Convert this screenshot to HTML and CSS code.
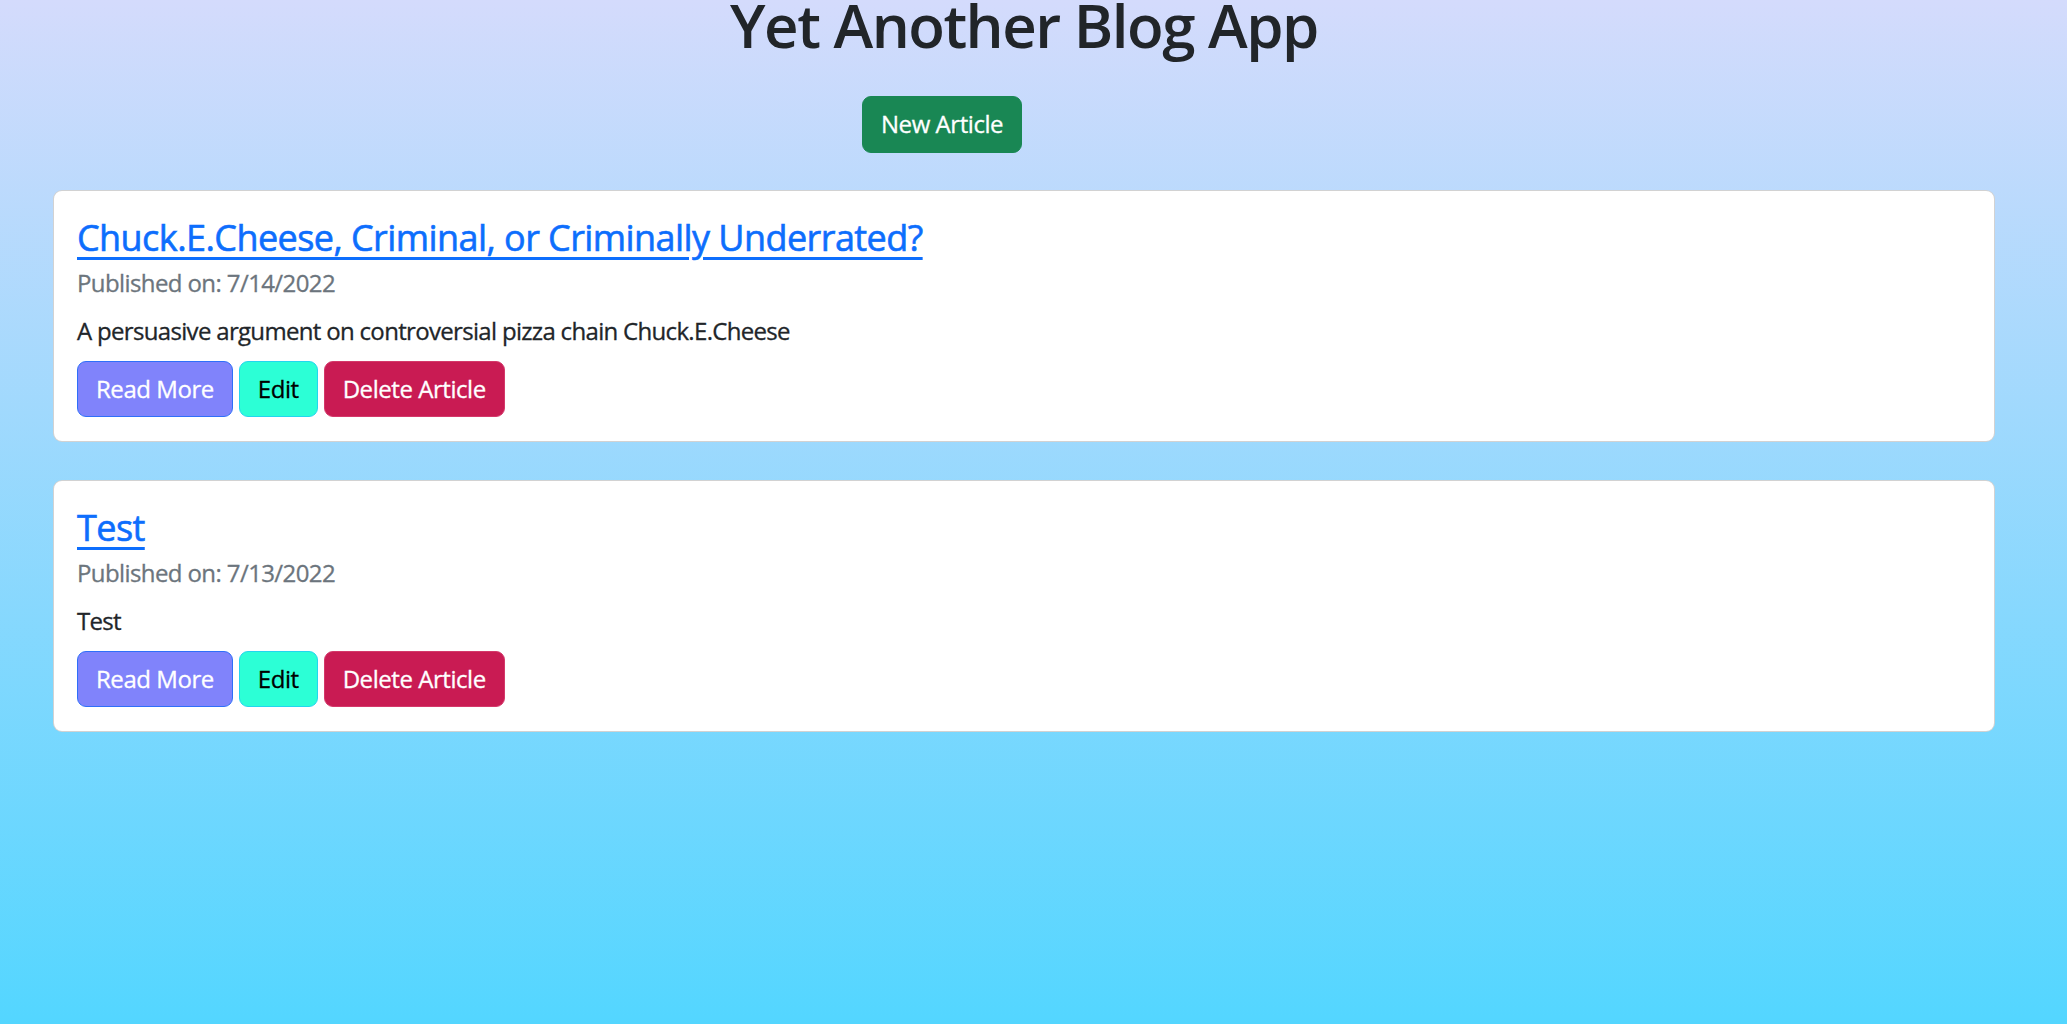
FILE: index.html
```html
<!DOCTYPE html>
<html lang="en">
<head>
<meta charset="utf-8">
<title>Yet Another Blog App</title>
<link rel="stylesheet" href="styles.css">
</head>
<body>
<div class="container">
  <h1 class="page-title">Yet Another Blog App</h1>
  <div class="toolbar">
    <a class="btn btn-success" href="#">New Article</a>
  </div>
  <div class="card">
    <h4 class="card-title"><a href="#">Chuck.E.Cheese, Criminal, or Criminally Underrated?</a></h4>
    <div class="card-subtitle">Published on: 7/14/2022</div>
    <p class="card-text">A persuasive argument on controversial pizza chain Chuck.E.Cheese</p>
    <div class="actions">
      <a class="btn btn-read" href="#">Read More</a>
      <a class="btn btn-edit" href="#">Edit</a>
      <button class="btn btn-delete" type="button">Delete Article</button>
    </div>
  </div>
  <div class="card">
    <h4 class="card-title"><a href="#">Test</a></h4>
    <div class="card-subtitle">Published on: 7/13/2022</div>
    <p class="card-text">Test</p>
    <div class="actions">
      <a class="btn btn-read" href="#">Read More</a>
      <a class="btn btn-edit" href="#">Edit</a>
      <button class="btn btn-delete" type="button">Delete Article</button>
    </div>
  </div>
</div>
</body>
</html>
```
FILE: styles.css
```css
html {
  height: 100%;
}
body {
  margin: 0;
  min-height: 100%;
  background: linear-gradient(to bottom, #d4dbfc 0%, #53d6ff 100%);
  font-family: "Open Sans", "Noto Sans", "DejaVu Sans", sans-serif;
  color: #212529;
  -webkit-text-stroke: 0.3px currentColor;
}
.container {
  margin: 0 72px 0 53px;
  display: flex;
  flex-direction: column;
}
.page-title {
  margin: 0;
  font-size: 60px;
  font-weight: 600;
  line-height: 50px;
  text-align: center;
  letter-spacing: -1.5px;
  -webkit-text-stroke: 0;
}
.toolbar {
  display: flex;
  margin-top: 46px;
  padding-left: 809px;
}
.btn {
  display: inline-block;
  box-sizing: border-box;
  font-family: inherit;
  font-size: 24px;
  line-height: 36px;
  padding: 9px 18px;
  border: 1px solid transparent;
  border-radius: 9px;
  text-decoration: none;
  cursor: pointer;
  letter-spacing: -0.45px;
  -webkit-text-stroke: 0.3px currentColor;
}
.btn-success {
  background: #198754;
  border-color: #198754;
  color: #fff;
  padding-bottom: 10px;
}
.card {
  background: #fff;
  border: 1px solid rgba(0, 0, 0, 0.175);
  border-radius: 9px;
  padding: 25px 23px 24px;
  margin-top: 37px;
}
.card + .card {
  margin-top: 38px;
}
.card-title {
  margin: 0 0 6px;
  font-size: 36px;
  font-weight: 500;
  line-height: 43px;
  letter-spacing: -0.57px;
  -webkit-text-stroke: 0.6px currentColor;
}
.card-title a {
  color: #0d6efd;
  text-decoration: underline;
  text-underline-offset: 6px;
  text-decoration-thickness: 3px;
}
.card-subtitle {
  font-size: 24px;
  line-height: 36px;
  color: #6c757d;
  margin-bottom: 12px;
  letter-spacing: -0.6px;
}
.card-text {
  margin: 0 0 12px;
  font-size: 24px;
  line-height: 36px;
  letter-spacing: -0.68px;
}
.actions {
  display: flex;
  gap: 6px;
}
.btn-read {
  background: #8083fb;
  border-color: #2f6ff9;
  color: #fff;
}
.btn-edit {
  background: #2cffd6;
  border-color: #22d6ef;
  color: #000;
}
.btn-delete {
  background: #c91b53;
  border-color: #d4386a;
  color: #fff;
}
```
